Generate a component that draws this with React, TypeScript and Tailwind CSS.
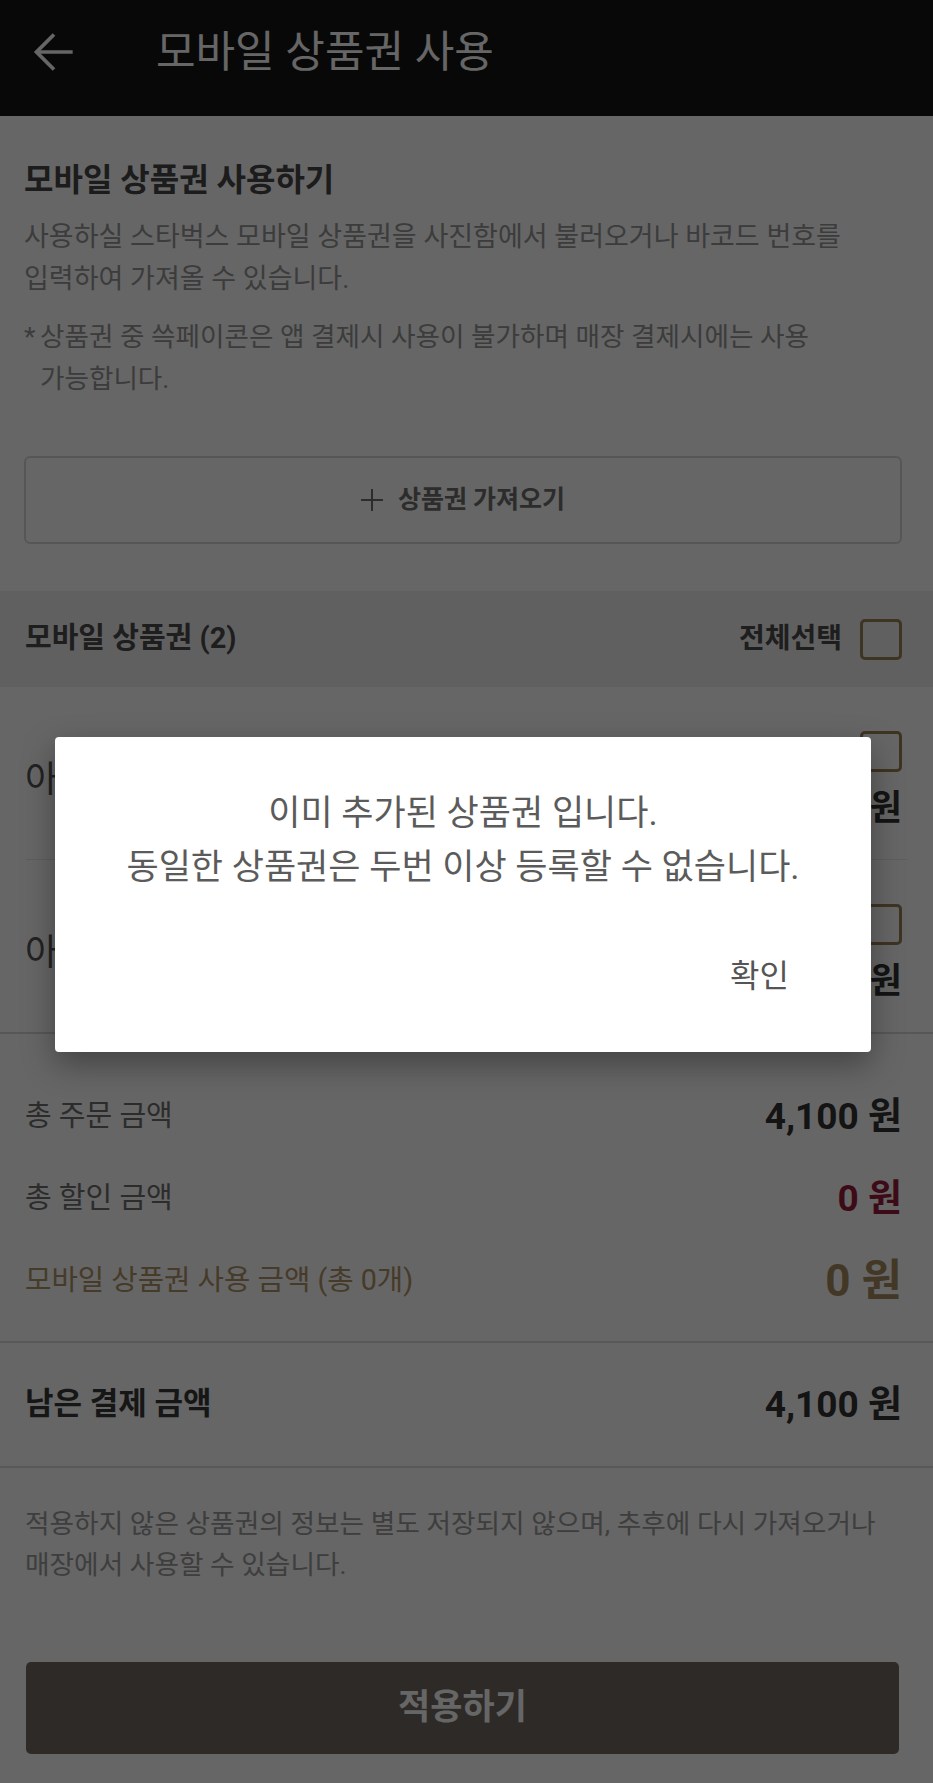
import React from "react";

function Checkbox() {
  return <div className="w-[42px] h-[41px] shrink-0 rounded-[5px] border-[3px] border-[#9c8259]" />;
}

function VoucherRow({ name, price }: { name: string; price: string }) {
  return (
    <div className="flex items-center justify-between pl-[25px] pr-[31px] pt-[44px] pb-[30px]">
      <div className="text-[36px] leading-[44px] text-[#555555]">{name}</div>
      <div className="flex flex-col items-end">
        <Checkbox />
        <div className="mt-[17px] text-[35px] leading-[40px] font-bold text-[#323232]">{price}</div>
      </div>
    </div>
  );
}

function TotalRow({
  label,
  value,
  labelClass,
  valueClass,
}: {
  label: string;
  value: string;
  labelClass: string;
  valueClass: string;
}) {
  return (
    <div className="h-[82px] flex items-center justify-between">
      <span className={labelClass}>{label}</span>
      <span className={valueClass}>{value}</span>
    </div>
  );
}

export default function App() {
  return (
    <div className="relative w-[933px] min-h-[1783px] bg-white font-['Roboto','Noto_Sans_CJK_KR',sans-serif]">
      {/* Header */}
      <header className="h-[116px] bg-[#141414] flex items-center pb-[12px]">
        <svg
          className="ml-[26px] w-[56px] h-[56px] shrink-0"
          viewBox="0 0 24 24"
          fill="none"
          stroke="#ffffff"
          strokeWidth="1.6"
        >
          <path d="M20 12H4.8" />
          <path d="M12 4.5L4.5 12l7.5 7.5" />
        </svg>
        <h1 className="ml-[74px] text-[43px] leading-[56px] text-white">모바일 상품권 사용</h1>
      </header>

      {/* Intro */}
      <section className="pl-[24px] pr-[31px] pt-[44px]">
        <h2 className="text-[32px] leading-[40px] font-bold text-[#464646]">모바일 상품권 사용하기</h2>
        <p className="mt-[16px] text-[27px] leading-[42px] text-[#969696] break-keep">
          사용하실 스타벅스 모바일 상품권을 사진함에서 불러오거나 바코드 번호를 입력하여 가져올 수 있습니다.
        </p>
        <div className="mt-[16px] flex text-[26.6px] leading-[42px] text-[#969696]">
          <span className="w-[16px] shrink-0">*</span>
          <p className="break-keep">상품권 중 쓱페이콘은 앱 결제시 사용이 불가하며 매장 결제시에는 사용 가능합니다.</p>
        </div>
        <button className="mt-[56px] w-full h-[88px] border-2 border-[#d7d7d7] rounded-[6px] flex items-center justify-center gap-[15px] text-[25px] font-bold text-[#6e6e6e]">
          <svg className="w-[22px] h-[22px]" viewBox="0 0 22 22" stroke="#6e6e6e" strokeWidth="2">
            <path d="M11 0v22M0 11h22" />
          </svg>
          <span className="leading-[30px]">상품권 가져오기</span>
        </button>
      </section>

      {/* Voucher list header */}
      <div className="mt-[47px] h-[96px] bg-[#f0f0f0] flex items-center justify-between pl-[25px] pr-[31px]">
        <span className="text-[29px] font-bold text-[#4b4b4b]">모바일 상품권 (2)</span>
        <div className="flex items-center gap-[18px]">
          <span className="text-[28px] font-bold text-[#4b4b4b]">전체선택</span>
          <Checkbox />
        </div>
      </div>

      {/* Voucher list */}
      <div className="border-b-2 border-[#d9d9d9]">
        <VoucherRow name="아메리카노" price="4,100 원" />
        <div className="mx-[26px] border-t border-[#ebebeb]" />
        <VoucherRow name="아이스 라떼" price="4,600 원" />
      </div>

      {/* Totals */}
      <div className="pl-[25px] pr-[31px] pt-[42px] pb-[19px] border-b-2 border-[#dedede]">
        <TotalRow
          label="총 주문 금액"
          value="4,100 원"
          labelClass="text-[29px] text-[#6e6e6e]"
          valueClass="text-[37px] font-bold text-[#323232]"
        />
        <TotalRow
          label="총 할인 금액"
          value="0 원"
          labelClass="text-[29px] text-[#6e6e6e]"
          valueClass="text-[37px] font-bold text-[#961d3a]"
        />
        <TotalRow
          label="모바일 상품권 사용 금액 (총 0개)"
          value="0 원"
          labelClass="text-[28.7px] text-[#b09468]"
          valueClass="text-[44px] font-bold text-[#a88d5f]"
        />
      </div>

      <div className="h-[125px] flex items-center justify-between pl-[25px] pr-[31px] border-b-2 border-[#dedede]">
        <span className="text-[31px] font-bold text-[#373737]">남은 결제 금액</span>
        <span className="text-[37px] font-bold text-[#323232]">4,100 원</span>
      </div>

      {/* Footnote and apply */}
      <div className="pl-[25px] pr-[31px] pt-[36px] pb-[27px]">
        <p className="text-[26.7px] leading-[41px] text-[#9b9b9b] break-keep">
          적용하지 않은 상품권의 정보는 별도 저장되지 않으며, 추후에 다시 가져오거나 매장에서 사용할 수 있습니다.
        </p>
        <button className="mt-[76px] ml-[1px] w-[873px] h-[92px] rounded-[5px] bg-[#736961] text-white text-[35px] font-bold">
          적용하기
        </button>
      </div>

      {/* Dim overlay + dialog */}
      <div className="absolute inset-0 bg-black/60 flex items-center justify-center pr-[7px] pt-[6px]">
        <div className="w-[816px] h-[315px] bg-white rounded-[4px] shadow-[0_12px_32px_rgba(0,0,0,0.35)] flex flex-col pt-[50px]">
          <p className="text-center text-[35px] leading-[54px] text-[#5b5b5b]">
            이미 추가된 상품권 입니다.
            <br />
            동일한 상품권은 두번 이상 등록할 수 없습니다.
          </p>
          <div className="mt-[63px] flex justify-end pr-[82px]">
            <button className="text-[32px] leading-[36px] text-[#555555]">확인</button>
          </div>
        </div>
      </div>
    </div>
  );
}
